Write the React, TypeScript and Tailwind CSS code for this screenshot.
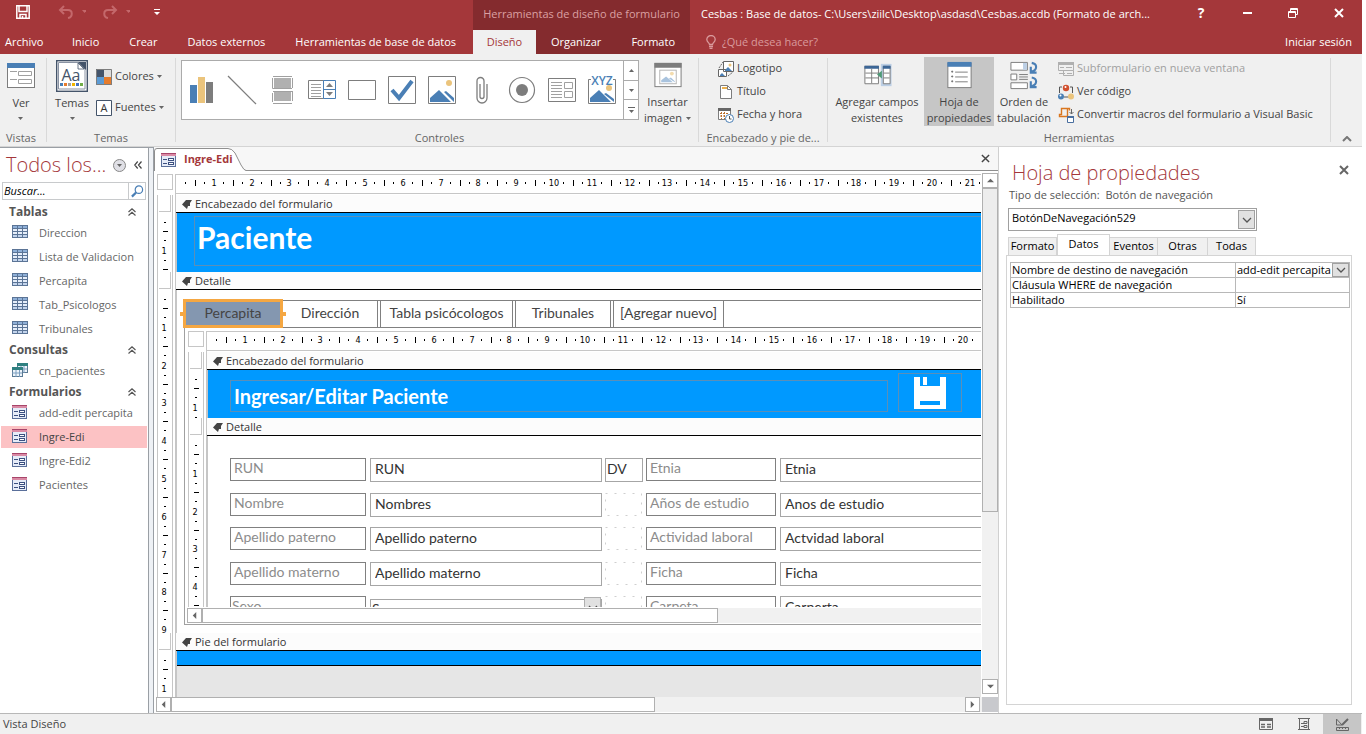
import type { ReactNode } from "react"

const PX_PER_CM = 37.8

const tables = ["Direccion", "Lista de Validacion", "Percapita", "Tab_Psicologos", "Tribunales"]
const forms = ["add-edit percapita", "Ingre-Edi", "Ingre-Edi2", "Pacientes"]

const fields = [
  { id: "run", label: "RUN", value: "RUN", id2: "etnia", label2: "Etnia", value2: "Etnia" },
  { id: "nombre", label: "Nombre", value: "Nombres", id2: "estudio", label2: "Años de estudio", value2: "Anos de estudio" },
  { id: "paterno", label: "Apellido paterno", value: "Apellido paterno", id2: "laboral", label2: "Actividad laboral", value2: "Actvidad laboral" },
  { id: "materno", label: "Apellido materno", value: "Apellido materno", id2: "ficha", label2: "Ficha", value2: "Ficha" },
  { id: "sexo", label: "Sexo", value: "Sexo", id2: "carpeta", label2: "Carpeta", value2: "Carperta" },
]

/* ---------- small glyphs ---------- */

function Caret({ className = "" }: { className?: string }) {
  return (
    <svg viewBox="0 0 5 3" className={`h-[3px] w-[5px] shrink-0 fill-[#666] ${className}`} aria-hidden="true">
      <path d="M0 0h5L2.5 3z" />
    </svg>
  )
}

function Cross({ className = "" }: { className?: string }) {
  return (
    <svg viewBox="0 0 10 10" className={`size-[10px] ${className}`} fill="none" stroke="currentColor" strokeWidth="2" aria-hidden="true">
      <path d="M1 1l8 8M9 1l-8 8" />
    </svg>
  )
}

function Chevron() {
  return (
    <svg viewBox="0 0 10 6" className="h-[6px] w-[10px]" fill="none" stroke="#555" strokeWidth="1.3" aria-hidden="true">
      <path d="M1 1l4 4 4-4" />
    </svg>
  )
}

function TableIcon() {
  return (
    <svg viewBox="0 0 16 14" className="h-[14px] w-4 shrink-0" shapeRendering="crispEdges" aria-hidden="true">
      <path d="M0 0h16v13H0z" fill="#5b7496" />
      <path d="M1 1h4v2H1zM6 1h4v2H6zM11 1h4v2h-4z" fill="#8fb0d8" />
      <path d="M1 4h4v2H1zM6 4h4v2H6zM11 4h4v2h-4zM1 7h4v2H1zM6 7h4v2H6zM11 7h4v2h-4z" fill="#e6eefa" />
      <path d="M1 10h4v2H1zM6 10h4v2H6zM11 10h4v2h-4z" fill="#c3d4ec" />
    </svg>
  )
}

function QueryIcon() {
  return (
    <svg viewBox="0 0 16 16" className="size-4 shrink-0" aria-hidden="true">
      <rect x="5.5" y="1.5" width="10" height="9" fill="#eef5fb" stroke="#5b7a94" />
      <rect x="5" y="1" width="11" height="3" fill="#2f8080" />
      <path d="M9 4v7M12 4v7M5 7h10" stroke="#7d9fc0" />
      <rect x=".5" y="5.5" width="10" height="9" fill="#eef5fb" stroke="#5b7a94" />
      <rect y="5" width="11" height="3" fill="#2f8080" />
      <path d="M4 8v7M7.5 8v7M0 11h10" stroke="#7d9fc0" />
    </svg>
  )
}

function FormIcon() {
  return (
    <svg viewBox="0 0 15 14" className="h-[14px] w-[15px] shrink-0" shapeRendering="crispEdges" aria-hidden="true">
      <rect width="15" height="14" fill="#5a6f9a" />
      <rect x="1" y="1" width="13" height="12" fill="#e6ecf8" />
      <rect width="15" height="1" fill="#a8456a" />
      <rect y="1" width="15" height="2" fill="#d98aa5" />
      <path d="M2 6h4v1H2zM2 10h4v1H2zM7 5h6v3H7zM7 9h6v3H7z" fill="#3c5080" />
      <path d="M8 6h4v1H8zM8 10h4v1H8z" fill="#fff" />
    </svg>
  )
}

function FormSheet() {
  return (
    <svg viewBox="0 0 32 32" className="size-8" fill="none" aria-hidden="true">
      <rect x="2.5" y="3.5" width="27" height="24" fill="#fff" stroke="#7d7d7d" />
      <rect x="2" y="3" width="28" height="5" fill="#4a7fb5" />
      <path d="M5 11.5h7M5 19.5h7M13.500 11.500h13v4h-13zM13.500 19.500h13v4h-13z" stroke="#a0a0a0" />
    </svg>
  )
}

function Mountains() {
  return (
    <>
      <circle cx="21" cy="7" r="3" fill="#ebc47c" />
      <path d="M2 26v-4l9-8 12 12zM16 16l2-1 8 7v4z" fill="#4a7fb5" />
    </>
  )
}

/* ---------- ribbon parts ---------- */

function Group({ label, className = "", children }: { label: string; className?: string; children: ReactNode }) {
  return (
    <>
      <section className={`flex flex-col justify-between ${className}`}>
        <div className="flex">{children}</div>
        <h2 className="h-4 text-center text-[11px] leading-4 whitespace-nowrap text-[#666]">{label}</h2>
      </section>
      <div className="my-1 w-px shrink-0 bg-[#d9d9d9]" />
    </>
  )
}

function BigButton({ icon, className = "", children }: { icon: ReactNode; className?: string; children: ReactNode }) {
  return (
    <button className={`mt-[3px] flex h-[69px] shrink-0 flex-col items-center gap-[3px] pt-[3px] text-center leading-4 ${className}`}>
      {icon}
      <span className="flex flex-col items-center whitespace-nowrap">{children}</span>
    </button>
  )
}

function SmallButton({ icon, className = "", children }: { icon: ReactNode; className?: string; children: ReactNode }) {
  return (
    <button className={`flex h-[23px] items-center gap-[3px] whitespace-nowrap ${className}`}>
      <svg viewBox="0 0 16 16" className="size-4 shrink-0" fill="none" aria-hidden="true">
        {icon}
      </svg>
      {children}
    </button>
  )
}

const gallery: { name: string; icon: ReactNode }[] = [
  {
    name: "Gráfico",
    icon: (
      <>
        <path d="M2 9h7v18H2z" fill="#4a7fb5" />
        <path d="M10 1h7v26h-7z" fill="#ebc47c" />
        <path d="M18 6h7v21h-7z" fill="#7d7d7d" />
      </>
    ),
  },
  { name: "Línea", icon: <path d="M0 0l28 28" stroke="#7d7d7d" strokeWidth="1.2" /> },
  {
    name: "Salto de página",
    icon: (
      <>
        <path d="M6 2h17v10H6zM6 16h17v9H6z" fill="#b0b0b0" />
        <path d="M5 .5h19M4.500 2v10.500H24M24.500 12V2M5 15.500h19M4.500 17v9M24.500 15v10M5 27.500h19" stroke="#a0a0a0" />
      </>
    ),
  },
  {
    name: "Cuadro de lista",
    icon: (
      <>
        <path d="M.5 4.500h15v18H.5z" stroke="#7d7d7d" />
        <path d="M3 8.500h10M3 11.500h10M3 14.500h10M3 17.500h10M3 20.500h10" stroke="#a0a0a0" />
        <path d="M15.500 4.500h12v18h-12zM15.500 13.500h12" stroke="#4a7fb5" />
        <path d="M18 11h7l-3.500-4zM18 16h7l-3.500 4z" fill="#7d7d7d" />
      </>
    ),
  },
  { name: "Rectángulo", icon: <path d="M.5 4.500h27v19H.5z" stroke="#7d7d7d" /> },
  {
    name: "Casilla",
    icon: (
      <>
        <path d="M.5.500h27v27H.5z" stroke="#7d7d7d" />
        <path d="M4 14l7 8L24 5" stroke="#4a7fb5" strokeWidth="4" />
      </>
    ),
  },
  {
    name: "Imagen",
    icon: (
      <>
        <path d="M.5.500h27v27H.5z" stroke="#7d7d7d" />
        <Mountains />
      </>
    ),
  },
  {
    name: "Datos adjuntos",
    icon: <path d="M12 8v12.500a2 2 0 0 0 4 0V5a3.500 3.500 0 0 0-7 0v17a5 5 0 0 0 10 0V8" stroke="#7d7d7d" strokeWidth="1.3" />,
  },
  {
    name: "Botón de opción",
    icon: (
      <>
        <circle cx="14" cy="14" r="12.5" stroke="#7d7d7d" strokeWidth="1.2" />
        <circle cx="14" cy="14" r="6" fill="#7d7d7d" />
      </>
    ),
  },
  {
    name: "Subformulario",
    icon: (
      <>
        <path d="M.5 2.500h27v23H.5z" stroke="#7d7d7d" />
        <path d="M3 6.500h11M3 9.500h11M3 12.500h11M3 15.500h11M3 18.500h11M3 21.500h11M16.500 6.500h8v6h-8zM16.500 15.500h8v6h-8z" stroke="#a0a0a0" />
      </>
    ),
  },
  {
    name: "Imagen enlazada",
    icon: (
      <>
        <path d="M3 3.500H.5v24h27v-24H25" stroke="#7d7d7d" />
        <circle cx="21" cy="12" r="3" fill="#ebc47c" />
        <path d="M2 26v-4l9-8 12 12zM16 18l2-1 8 6v3z" fill="#4a7fb5" />
        <text x="14" y="9" textAnchor="middle" fontSize="12" fontWeight="600" fill="#4a7fb5">
          XYZ
        </text>
      </>
    ),
  },
]

function Ribbon() {
  return (
    <div className="flex h-[93px] shrink-0 border-b border-[#d4d4d4] bg-[#f0f0f0] text-[11px] text-[#444]">
      <Group label="Vistas" className="w-[46px] shrink-0 pr-1">
        <BigButton className="w-[42px]" icon={<FormSheet />}>
          Ver
          <Caret className="mt-[6px]" />
        </BigButton>
      </Group>

      <Group label="Temas" className="w-32 shrink-0 pr-1 pl-1">
        <BigButton
          className="w-[42px]"
          icon={
            <svg viewBox="0 0 32 32" className="size-8" aria-hidden="true">
              <rect x=".7" y=".7" width="30.6" height="30.6" fill="#fff" stroke="#44546a" strokeWidth="1.4" />
              <path d="M2.5 29V2.500h20l6.500 6.500v20z" fill="#fff" stroke="#8a93a3" />
              <path d="M22 2h8v8z" fill="#44546a" />
              <path d="M22 3v6h6z" fill="#fff" stroke="#44546a" strokeWidth=".8" />
              <text x="15" y="21" textAnchor="middle" fontSize="16" fill="#44546a">
                Aa
              </text>
              <path d="M4 23h3v3H4z" fill="#4a7fb5" />
              <path d="M8 23h3v3H8z" fill="#e67c2c" />
              <path d="M12 23h3v3h-3z" fill="#a0a0a0" />
              <path d="M16 23h3v3h-3z" fill="#f0b400" />
              <path d="M20 23h3v3h-3z" fill="#4472c4" />
              <path d="M24 23h3v3h-3z" fill="#70ad47" />
            </svg>
          }
        >
          Temas
          <Caret className="mt-[6px]" />
        </BigButton>
        <div className="mt-[11px] ml-[3px] flex flex-col gap-2">
          <SmallButton
            icon={
              <>
                <path d="M0 0h8v8H0z" fill="#44546a" />
                <path d="M8 0h8v8H8z" fill="#dcdcdc" />
                <path d="M0 8h8v8H0z" fill="#5b9bd5" />
                <path d="M8 8h8v8H8z" fill="#e67c2c" />
                <path d="M.5.500h15v15H.5z" stroke="#7d7d7d" />
              </>
            }
          >
            Colores
            <Caret />
          </SmallButton>
          <SmallButton
            icon={
              <>
                <path d="M.5.500h15v15H.5z" fill="#fff" stroke="#44546a" />
                <text x="8" y="12" textAnchor="middle" fontSize="11" fill="#333">
                  A
                </text>
              </>
            }
          >
            Fuentes
            <Caret />
          </SmallButton>
        </div>
      </Group>

      <Group label="Controles" className="w-[522px] shrink-0 pl-[5px]">
        <div className="mt-[6px] flex h-[60px] border border-[#ababab] bg-white">
          {gallery.map((item) => (
            <button key={item.name} aria-label={item.name} className="flex w-10 items-center justify-center">
              <svg viewBox="0 0 28 28" className="size-7 overflow-visible" fill="none" aria-hidden="true">
                {item.icon}
              </svg>
            </button>
          ))}
          <div className="ml-px flex w-[15px] flex-col divide-y divide-[#ababab] border-l border-[#ababab]">
            <button aria-label="Fila anterior" className="flex flex-1 items-center justify-center">
              <Caret className="rotate-180" />
            </button>
            <button aria-label="Fila siguiente" className="flex flex-1 items-center justify-center">
              <Caret />
            </button>
            <button aria-label="Más controles" className="flex flex-1 flex-col items-center justify-center gap-0.5">
              <span className="h-px w-[7px] bg-[#666]" />
              <Caret />
            </button>
          </div>
        </div>
        <BigButton
          className="w-[57px]"
          icon={
            <svg viewBox="0 0 32 32" className="size-8" aria-hidden="true">
              <rect x="2.5" y="3.5" width="27" height="24" fill="#fff" stroke="#7d7d7d" />
              <rect x="2" y="3" width="28" height="5" fill="#7d7d7d" />
              <rect x="7.5" y="10.5" width="17" height="14" fill="#fff" stroke="#b5b5b5" />
              <circle cx="20" cy="14" r="2" fill="#f3dcae" />
              <path d="M9 23v-2l5-4 7 6zM17 19l2-1 4 4v1z" fill="#a9c3de" />
            </svg>
          }
        >
          <span>Insertar</span>
          <span className="flex items-center gap-1">
            imagen <Caret />
          </span>
        </BigButton>
      </Group>

      <Group label="Encabezado y pie de..." className="w-32 shrink-0">
        <div className="mt-[3px] ml-[19px] flex flex-col">
          <SmallButton
            icon={
              <>
                <path d="M5.500.500h10v10h-10zM.5 8.500h8v7h-8z" fill="#fff" stroke="#666" />
                <path d="M7 9l3-3 4 4H7zM2 14l2-2 3 3H2z" fill="#4a7fb5" />
                <circle cx="12" cy="4" r="1.5" fill="#ebc47c" />
                <path d="M1 7l4-6M10 15l5-4" stroke="#666" strokeDasharray="2 1" />
              </>
            }
          >
            Logotipo
          </SmallButton>
          <SmallButton
            icon={
              <>
                <path d="M2.500 1.500h7l4 4v9h-11z" fill="#fff" stroke="#7d7d7d" />
                <path d="M9.500 1.500v4h4" stroke="#7d7d7d" />
                <path d="M4 3h5v2H4z" fill="#ebb04c" />
              </>
            }
          >
            Título
          </SmallButton>
          <SmallButton
            icon={
              <>
                <path d="M.5 1.500h12v11H.5z" fill="#fff" stroke="#7d7d7d" />
                <path d="M0 1h13v3H0z" fill="#666" />
                <path d="M2 6.500h9M2 9h5M3.500 5v7M6.500 5v7" stroke="#ba7030" strokeDasharray="2 1" />
                <circle cx="11.5" cy="11.5" r="4" fill="#fff" stroke="#4a7fb5" />
                <path d="M11.500 9v3h2" stroke="#555" />
              </>
            }
          >
            Fecha y hora
          </SmallButton>
        </div>
      </Group>

      <Group label="Herramientas" className="w-[502px] shrink-0">
        <BigButton
          className="ml-0.5 w-[94px]"
          icon={
            <svg viewBox="0 0 32 32" className="size-8" aria-hidden="true">
              <path d="M20 4h11v23H20z" fill="#bccfe5" />
              <path d="M3.500 6.500h14v18h-14zM22.500 6.500h7v18h-7z" fill="#fff" stroke="#7d7d7d" />
              <path d="M3 6h15v3H3zM22 6h8v3h-8z" fill="#3c6696" />
              <path d="M4 13.500h14M4 18.500h14M10.500 9v15M23 13.500h6M23 18.500h6" stroke="#7d7d7d" />
              <path d="M16 15l5-4v8z" fill="#4f9a77" />
            </svg>
          }
        >
          <span>Agregar campos</span>
          <span>existentes</span>
        </BigButton>
        <BigButton
          className="w-[70px] bg-[#c6c6c6]"
          icon={
            <svg viewBox="0 0 32 32" className="size-8" aria-hidden="true">
              <rect x="4.5" y="3.5" width="24" height="25" fill="#fff" stroke="#7d7d7d" />
              <rect x="4" y="2" width="25" height="5" fill="#4a7fb5" />
              <path d="M12 12.500h13M12 17.500h13M12 22.500h13" stroke="#7d7d7d" />
              <path d="M8.500 11.500h1v1h-1zM8.500 16.500h1v1h-1zM8.500 21.500h1v1h-1z" fill="none" stroke="#666" />
            </svg>
          }
        >
          <span>Hoja de</span>
          <span>propiedades</span>
        </BigButton>
        <BigButton
          className="w-[60px]"
          icon={
            <svg viewBox="0 0 32 32" className="size-8" aria-hidden="true">
              <path d="M2.500 2.500h17v8h-17zM2.500 14.500h6v6h-6zM2.500 23.500h17v6h-17z" fill="#fff" stroke="#7d7d7d" />
              <path d="M15 3h4v7h-4z" fill="#bccfe5" />
              <path d="M11 15h9M11 17.500h9M11 20h9" stroke="#7d7d7d" />
              <path
                d="M24 3c6 1 6 7 0 9M29 13h-6V7M24 18c6 1 6 7 0 9M29 28h-6v-6"
                fill="none"
                stroke="#4a7fb5"
                strokeWidth="2.2"
              />
            </svg>
          }
        >
          <span>Orden de</span>
          <span>tabulación</span>
        </BigButton>
        <div className="mt-[3px] ml-1 flex flex-col">
          <SmallButton
            className="text-[#a0a0a0]"
            icon={
              <>
                <path d="M.5 1.500h15v8H.5zM5.500 9.500v5h10v-5" stroke="#b0b0b0" />
                <path d="M0 1h16v3H0z" fill="#b0b0b0" />
                <path d="M2 6.500h4M8 6.500h6M1 12.500h6M9 12.500h5" stroke="#b0b0b0" />
              </>
            }
          >
            Subformulario en nueva ventana
          </SmallButton>
          <SmallButton
            icon={
              <>
                <path d="M4 3H1.500v6M12 3h2.500v6M6 13h5" stroke="#555" />
                <circle cx="8" cy="4" r="3.2" fill="#d1502f" />
                <circle cx="3" cy="12.5" r="3" fill="#4a7fb5" />
                <circle cx="13" cy="12.5" r="3" fill="#ebc47c" />
                <circle cx="7.5" cy="3" r="1" fill="#fff" />
                <circle cx="2.5" cy="11.5" r="1" fill="#fff" />
              </>
            }
          >
            Ver código
          </SmallButton>
          <SmallButton
            icon={
              <>
                <path d="M3.500 1.500h6v8h-8v-2h2zM9.500 1.500h2v2" stroke="#d9761f" strokeWidth="1.4" />
                <path d="M13.500 2v5M11.500 5l2 2 2-2" stroke="#666" />
                <path d="M9.500 9.500h6v6h-6z" fill="#fff" stroke="#4a6f9f" />
                <path d="M9 9h7v2H9z" fill="#4a6f9f" />
              </>
            }
          >
            Convertir macros del formulario a Visual Basic
          </SmallButton>
        </div>
      </Group>

      <button aria-label="Contraer la cinta" className="mr-2.5 mb-1 ml-auto self-end">
        <svg viewBox="0 0 10 6" className="h-[6px] w-[10px]" fill="none" stroke="#777" strokeWidth="2" aria-hidden="true">
          <path d="M1 5l4-4 4 4" />
        </svg>
      </button>
    </div>
  )
}

function TitleBar() {
  return (
    <header className="flex h-[54px] shrink-0 bg-[#a4373a] text-[11px] whitespace-nowrap text-white">
      <div className="flex w-[473px] shrink-0 flex-col">
        <div className="flex h-[30px] items-center pb-1.5 pl-4">
          <button aria-label="Guardar">
            <svg viewBox="0 0 14 14" className="size-[14px]" fill="none" stroke="#fff" strokeWidth="1.5" aria-hidden="true">
              <path d="M.8.800h12.400v12.400H.8zM3 1v5.500h8V1M4 13V9.500h6V13M6.500 11v2" />
            </svg>
          </button>
          <button aria-label="Deshacer" className="ml-7">
            <svg viewBox="0 0 28 14" className="h-[14px] w-7" fill="none" stroke="#c4686b" strokeWidth="2" aria-hidden="true">
              <path d="M6 1L2 5l4 4M2 5h8c5 0 5 7 0 8" />
              <path d="M24 5h5l-2.500 3z" fill="#c4686b" stroke="none" />
            </svg>
          </button>
          <button aria-label="Rehacer" className="ml-4">
            <svg viewBox="0 0 28 14" className="h-[14px] w-7" fill="none" stroke="#c4686b" strokeWidth="2" aria-hidden="true">
              <path d="M10 1l4 4-4 4M14 5H6c-5 0-5 7 0 8" />
              <path d="M24 5h5l-2.500 3z" fill="#c4686b" stroke="none" />
            </svg>
          </button>
          <button aria-label="Personalizar" className="ml-6">
            <svg viewBox="0 0 6 6" className="size-[6px]" fill="#fff" aria-hidden="true">
              <path d="M0 0h6v1H0zM0 3h6L3 6z" />
            </svg>
          </button>
        </div>
        <nav className="flex h-6">
          <button className="w-[57px] pl-[5px] text-left">Archivo</button>
          <button className="px-[15px]">Inicio</button>
          <button className="px-[15px]">Crear</button>
          <button className="px-[15px]">Datos externos</button>
          <button className="px-[15px]">Herramientas de base de datos</button>
        </nav>
      </div>

      <div className="flex w-[217px] shrink-0 flex-col bg-[#842b2e]">
        <p className="h-[30px] text-center leading-7 text-[#dba0a2]">Herramientas de diseño de formulario</p>
        <nav className="flex h-6">
          <button className="w-[63px] bg-[#f0f0f0] text-[#a4373a]">Diseño</button>
          <button className="px-[15px]">Organizar</button>
          <button className="px-[15px]">Formato</button>
        </nav>
      </div>

      <div className="flex min-w-0 flex-1 flex-col">
        <div className="flex h-[30px]">
          <h1 className="min-w-0 flex-1 truncate pl-[11px] leading-7">
            Cesbas : Base de datos- C:\Users\ziilc\Desktop\asdasd\Cesbas.accdb (Formato de arch...
          </h1>
          <button aria-label="Ayuda" className="h-[26px] w-[46px] text-sm font-bold">
            ?
          </button>
          <button aria-label="Minimizar" className="flex h-[26px] w-[46px] items-center justify-center">
            <span className="h-0.5 w-[9px] bg-white" />
          </button>
          <button aria-label="Restaurar" className="flex h-[26px] w-[46px] items-center justify-center">
            <svg viewBox="0 0 10 10" className="size-[10px]" fill="none" stroke="#fff" aria-hidden="true">
              <path d="M.5 3.500h7v6h-7zM2.500 3V.5h7v6H8M0 4.500h8M2 1.500h8" />
            </svg>
          </button>
          <button aria-label="Cerrar" className="flex h-[26px] w-[46px] items-center justify-center">
            <Cross />
          </button>
        </div>
        <div className="flex h-6 items-center justify-between pr-[10px] pl-4">
          <button className="flex items-center gap-1.5 text-[#d99a9c]">
            <svg viewBox="0 0 10 14" className="h-[14px] w-[10px]" fill="none" stroke="#d99a9c" strokeWidth="1.3" aria-hidden="true">
              <path d="M3.500 9.500C3.500 8 .8 7 .8 4.500a4.200 4 0 0 1 8.400 0c0 2.500-2.700 3.500-2.700 5zM3 11.500h4M3.500 13.500h3" />
            </svg>
            ¿Qué desea hacer?
          </button>
          <button>Iniciar sesión</button>
        </div>
      </div>
    </header>
  )
}

/* ---------- navigation pane ---------- */

function NavHeading({ children }: { children: ReactNode }) {
  return (
    <h3 className="flex h-[18px] items-center justify-between pr-3 pl-[9px] text-xs font-bold text-[#555]">
      {children}
      <svg viewBox="0 0 8 8" className="size-2" fill="none" stroke="#555" strokeWidth="1.2" aria-hidden="true">
        <path d="M.5 4L4 .8 7.500 4M.5 7.500L4 4.300l3.500 3.200" />
      </svg>
    </h3>
  )
}

function NavItem({ icon, active, children }: { icon: ReactNode; active?: boolean; children: ReactNode }) {
  return (
    <li className="h-6 p-px">
      <a
        href="#objeto"
        className={`flex h-[22px] items-center pl-[11px] whitespace-nowrap ${active ? "bg-[#fcc2c4] text-[#444]" : "text-[#666]"}`}
      >
        <span className="w-[27px] pb-0.5">{icon}</span>
        {children}
      </a>
    </li>
  )
}

function NavPane() {
  return (
    <aside className="flex w-[154px] shrink-0 border-t border-[#9a9fa5] text-[11px]">
      <div className="w-[148px] bg-white">
        <div className="flex h-[34px] items-center pl-[6px]">
          <h2 className="w-[107px] text-xl font-light whitespace-nowrap text-[#a4373a]">Todos los...</h2>
          <button aria-label="Filtrar objetos" className="flex size-[13px] items-center justify-center rounded-full border border-[#888] bg-[#e0e0e6]">
            <Caret />
          </button>
          <button aria-label="Contraer panel" className="ml-2">
            <svg viewBox="0 0 8 8" className="size-2" fill="none" stroke="#444" strokeWidth="1.2" aria-hidden="true">
              <path d="M3.700.5L.7 4l3 3.500M7.500.5l-3 3.500 3 3.500" />
            </svg>
          </button>
        </div>
        <div className="mr-0.5 ml-0.5 flex h-[18px] border border-[#c8cacc]">
          <input aria-label="Buscar" placeholder="Buscar..." className="w-[125px] pl-px italic outline-none placeholder:text-black" />
          <button aria-label="Buscar" className="flex flex-1 items-center justify-center border-l border-[#c8cacc]">
            <svg viewBox="0 0 14 14" className="size-[13px]" fill="none" stroke="#4a7fb5" aria-hidden="true">
              <circle cx="8.5" cy="5" r="4" strokeWidth="1.3" />
              <path d="M5.500 8L1 12.500" strokeWidth="2.4" />
            </svg>
          </button>
        </div>
        <div className="mt-[3px]">
          <NavHeading>Tablas</NavHeading>
          <ul>
            {tables.map((name) => (
              <NavItem key={name} icon={<TableIcon />}>
                {name}
              </NavItem>
            ))}
          </ul>
          <NavHeading>Consultas</NavHeading>
          <ul>
            <NavItem icon={<QueryIcon />}>cn_pacientes</NavItem>
          </ul>
          <NavHeading>Formularios</NavHeading>
          <ul>
            {forms.map((name) => (
              <NavItem key={name} icon={<FormIcon />} active={name === "Ingre-Edi"}>
                {name}
              </NavItem>
            ))}
          </ul>
        </div>
      </div>
      <div className="flex-1 border-x border-[#9a9fa5] bg-[#eef1f5]" />
    </aside>
  )
}

/* ---------- design surface ---------- */

function HRuler({ cm }: { cm: number }) {
  const units = Array.from({ length: cm + 1 }, (_, i) => i)
  return (
    <div className="flex pt-[3px]">
      <div className="flex w-[21px] shrink-0 pl-[3px]">
        <div className="size-4 border border-[#c6c6c6]" />
      </div>
      <svg className="h-[21px] min-w-0 flex-1 border-t border-l border-[#c6c6c6]" aria-hidden="true">
        <g shapeRendering="crispEdges">
          {units.map((u) => {
            const x = u * PX_PER_CM
            return (
              <g key={u}>
                <rect x={Math.round(x + 9)} y="7" width="1" height="2" />
                <rect x={Math.round(x + 19)} y="5" width="1" height="6" />
                <rect x={Math.round(x + 28)} y="7" width="1" height="2" />
              </g>
            )
          })}
          <rect y="18" width="100%" height="1" fill="#c6c6c6" />
        </g>
        {units.slice(1).map((u) => (
          <text key={u} x={Math.round(u * PX_PER_CM)} y="11" textAnchor="middle" fontSize="9" fontFamily="DejaVu Sans Condensed, Liberation Sans, sans-serif">
            {u}
          </text>
        ))}
      </svg>
    </div>
  )
}

function VRuler({ cm }: { cm: number }) {
  const units = Array.from({ length: cm + 1 }, (_, i) => i)
  return (
    <div className="w-[21px] shrink-0 pl-[3px]">
      <div className="relative h-full w-4 border-x border-[#c6c6c6]">
        <svg className="absolute inset-0 h-full w-full" aria-hidden="true">
          <g shapeRendering="crispEdges">
            {units.map((u) => {
              const y = u * PX_PER_CM
              return (
                <g key={u}>
                  <rect x="6" y={Math.round(y + 9)} width="2" height="1" />
                  <rect x="5" y={Math.round(y + 18)} width="5" height="1" />
                  <rect x="6" y={Math.round(y + 27)} width="2" height="1" />
                </g>
              )
            })}
          </g>
          {units.slice(1).map((u) => (
            <text key={u} x="6" y={Math.round(u * PX_PER_CM + 3)} textAnchor="middle" fontSize="9" fontFamily="DejaVu Sans Condensed, Liberation Sans, sans-serif">
              {u}
            </text>
          ))}
        </svg>
      </div>
    </div>
  )
}

function Section({ title, cm, className = "", children }: { title: string; cm: number; className?: string; children?: ReactNode }) {
  return (
    <>
      <div className="flex h-[18px] shrink-0">
        <div className="w-[21px] shrink-0 pl-[3px]">
          <div className="h-full w-4 border-x border-[#c6c6c6] pr-px pl-px">
            <div className="h-[17px] border-r border-b border-[#c6c6c6]" />
          </div>
        </div>
        <div className="w-px bg-[#c6c6c6]" />
        <div className="flex flex-1 items-center gap-[3px] border-b border-black bg-[#fcfcfc] pt-px pl-[6px] text-[11px] text-[#333]">
          <svg viewBox="0 0 10 9" className="h-[9px] w-[10px]" fill="#444" aria-hidden="true">
            <path d="M4 0h6L8 3v3H6l-1 3L0 4.500z" />
          </svg>
          {title}
        </div>
      </div>
      <div className={`flex shrink-0 overflow-hidden ${className}`}>
        <VRuler cm={cm} />
        <div className="w-0.5 shrink-0 bg-[#c6c6c6]" />
        {children}
      </div>
    </>
  )
}

function ScrollButton({ dir }: { dir: "up" | "down" | "left" | "right" }) {
  const paths = { up: "M0 6l4-4 4 4z", down: "M0 2h8L4 6z", left: "M6 0v8L2 4z", right: "M2 0l4 4-4 4z" }
  const labels = { up: "Arriba", down: "Abajo", left: "Izquierda", right: "Derecha" }
  return (
    <button aria-label={labels[dir]} className="flex h-[15px] min-w-[15px] shrink-0 items-center justify-center border border-[#b0b0b0] bg-white">
      <svg viewBox="0 0 8 8" className="size-[7px]" fill="#666" aria-hidden="true">
        <path d={paths[dir]} />
      </svg>
    </button>
  )
}

function FieldRow({ field, first, combo }: { field: (typeof fields)[number]; first: boolean; combo: boolean }) {
  const labelBox = "h-[23px] truncate border border-[#808080] text-sm leading-[18px] text-[#8c8c8c]"
  const inputBox = "h-6 min-w-0 border border-[#a6a6a6] pb-[3px] text-sm leading-[18px] text-[#333] outline-none"
  return (
    <div className="grid shrink-0 grid-cols-[137px_232px_38px_131px_1fr] gap-[3px] odd:h-[35px] even:h-[34px]">
      <label htmlFor={field.id} className={`w-[136px] ${labelBox} ${combo ? "pl-px" : "pl-[3px]"}`}>
        {field.label}
      </label>
      {combo ? (
        <div className="relative">
          <select id={field.id} className={`w-full appearance-none pl-px ${inputBox}`}>
            <option>{field.value}</option>
          </select>
          <span className="pointer-events-none absolute top-px right-px flex h-[22px] w-[17px] items-center justify-center border border-[#b0b0b0] bg-[#e1e1e1]">
            <Chevron />
          </span>
        </div>
      ) : (
        <input id={field.id} defaultValue={field.value} className={`pl-1 ${inputBox}`} />
      )}
      {first ? (
        <input aria-label="DV" defaultValue="DV" className={`pl-px ${inputBox}`} />
      ) : (
        <svg className="h-[23px] w-[38px]" fill="none" stroke="#cfcfcf" aria-hidden="true">
          <rect x=".5" y=".5" width="36" height="22" strokeDasharray="2 7" />
        </svg>
      )}
      <label htmlFor={field.id2} className={`w-[130px] pl-[3px] ${labelBox}`}>
        {field.label2}
      </label>
      <input id={field.id2} defaultValue={field.value2} className={`border-r-0 pl-1 ${inputBox}`} />
    </div>
  )
}

function Subform() {
  return (
    <div className="ml-[7px] flex h-[297px] flex-col overflow-hidden border-b border-l border-[#a0a0a0]">
      <HRuler cm={20} />
      <Section title="Encabezado del formulario" cm={1} className="h-12">
        <div className="flex flex-1 items-start bg-[#0099ff] pl-[22px]">
          <h3 className="mt-[10px] h-8 w-[658px] border border-[#5a8fb8] pl-[3px] font-['Lato',sans-serif] text-xl leading-[30px] font-bold text-white">
            Ingresar/Editar Paciente
          </h3>
          <button aria-label="Guardar paciente" className="mt-[3px] ml-[10px] flex h-[39px] w-16 items-center justify-center border border-[#5a8fb8]">
            <svg viewBox="0 0 32 32" className="size-8" aria-hidden="true">
              <path d="M0 0h32v32H0z" fill="#fff" />
              <path d="M6 0h20v9H6zM6 24h20v4H6z" fill="#0099ff" />
              <path d="M9 0h4v8H9z" fill="#fff" />
            </svg>
          </button>
        </div>
      </Section>
      <Section title="Detalle" cm={4} className="h-[171px]">
        <div className="flex flex-1 flex-col pt-[22px] pl-[22px] font-['Lato',sans-serif]">
          {fields.map((field, i) => (
            <FieldRow key={field.id} field={field} first={i === 0} combo={field.id === "sexo"} />
          ))}
        </div>
      </Section>
      <div className="mt-px ml-0.5 flex h-[15px] shrink-0 bg-[#f1f1f1]">
        <ScrollButton dir="left" />
        <div className="w-[65%] border border-[#b0b0b0] bg-white" />
      </div>
    </div>
  )
}

function FormTabs() {
  const tab = "border-r border-[#808080] pb-0.5"
  return (
    <nav className="mt-[10px] ml-[6px] flex h-7 shrink-0 border-y border-[#808080] font-['Lato',sans-serif] text-sm whitespace-nowrap text-[#444]">
      <button className="relative -mt-0.5 -mb-px w-[100px] border-[3px] border-[#f5a742] bg-[#8497b0] pb-0.5">
        Percapita
        <span className="absolute top-1/2 -left-1.5 size-1 -translate-y-1/2 bg-[#f5a742]" />
        <span className="absolute top-1/2 -right-1.5 size-1 -translate-y-1/2 bg-[#f5a742]" />
      </button>
      <button className={`w-[95px] ${tab}`}>Dirección</button>
      <button className={`ml-0.5 w-[133px] border-l ${tab}`}>Tabla psicócologos</button>
      <button className={`ml-0.5 w-24 border-l ${tab}`}>Tribunales</button>
      <button className={`ml-0.5 w-[111px] border-l ${tab}`}>[Agregar nuevo]</button>
    </nav>
  )
}

function Document() {
  return (
    <main className="flex min-w-0 flex-1 flex-col border-r border-[#d0d0d0] bg-white pb-px">
      <div className="flex h-6 shrink-0 items-end border-b border-[#8f8f8f] bg-[#f7f7f7]">
        <button className="relative -mb-px flex h-[23px] w-[92px] items-center pl-[7px] text-[11px] font-bold text-[#a4373a]">
          <svg viewBox="0 0 92 23" className="absolute inset-0 h-full w-full" aria-hidden="true">
            <path d="M.5 23V3Q.5.500 3 .5H74Q78 .5 81 5L87 17Q90 22.500 92 22.500V23z" fill="#fff" />
            <path d="M.5 23V3Q.5.500 3 .5H74Q78 .5 81 5L87 17Q90 22.500 92 22.500" fill="none" stroke="#8f8f8f" />
          </svg>
          <span className="relative flex items-center gap-2">
            <FormIcon />
            Ingre-Edi
          </span>
        </button>
        <button aria-label="Cerrar documento" className="mr-2 mb-[7px] ml-auto">
          <svg viewBox="0 0 10 10" className="size-[9px]" fill="none" stroke="#444" strokeWidth="1.6" aria-hidden="true">
            <path d="M1 1l8 8M9 1l-8 8" />
          </svg>
        </button>
      </div>

      <div className="flex min-h-0 flex-1">
        <div className="flex min-w-0 flex-1 flex-col overflow-hidden pr-px">
          <HRuler cm={21} />
          <Section title="Encabezado del formulario" cm={1} className="h-[59px]">
            <div className="flex-1 bg-[#0099ff] pt-[3px] pl-[17px]">
              <h2 className="h-[50px] border border-r-0 border-[#5a8fb8] pl-0.5 font-['Lato',sans-serif] text-3xl leading-10 font-bold text-white">
                Paciente
              </h2>
            </div>
          </Section>
          <Section title="Detalle" cm={9} className="h-[343px]">
            <div className="flex min-w-0 flex-1 flex-col">
              <FormTabs />
              <Subform />
            </div>
          </Section>
          <Section title="Pie del formulario" cm={1} className="min-h-0 flex-1">
            <div className="flex flex-1 flex-col bg-[#e6e6e6]">
              <div className="h-[15px] border-b border-black bg-[#0099ff]" />
            </div>
          </Section>
        </div>
        <div className="mt-0.5 mb-[3px] flex w-4 shrink-0 flex-col bg-[#f1f1f1]">
          <ScrollButton dir="up" />
          <div className="min-h-0 flex-1">
            <div className="h-[66%] border border-[#b0b0b0] bg-[#ededed]" />
          </div>
          <ScrollButton dir="down" />
        </div>
      </div>

      <div className="flex h-[15px] shrink-0 bg-[#f1f1f1]">
        <div className="w-0.5 bg-white" />
        <ScrollButton dir="left" />
        <div className="flex flex-1">
          <div className="w-[61%] border border-[#b0b0b0] bg-white" />
        </div>
        <ScrollButton dir="right" />
        <div className="ml-0.5 w-4 bg-[#c8c9cd]" />
      </div>
    </main>
  )
}

/* ---------- property sheet ---------- */

function PropertySheet() {
  const tab = "h-[18px] border border-b-0 border-[#d4d4d4] bg-[#f0f0f0]"
  const cell = "h-[15px] border border-[#b8b8b8] p-0 pl-px text-left font-normal"
  return (
    <aside className="flex w-[363px] shrink-0 flex-col bg-white px-[10px] pb-2 text-[11px] text-black">
      <div className="mt-[14px] flex items-start justify-between pl-[3px]">
        <h2 className="text-xl leading-6 font-light whitespace-nowrap text-[#a4373a]">Hoja de propiedades</h2>
        <button aria-label="Cerrar hoja de propiedades" className="mt-1 mr-[3px] text-[#666]">
          <Cross />
        </button>
      </div>
      <p className="h-[23px] leading-5 whitespace-pre text-[#555]">{"Tipo de selección:  Botón de navegación"}</p>
      <div className="relative ml-[-1px] w-[249px]">
        <select aria-label="Objeto" className="h-[23px] w-full appearance-none border border-[#a0a0a0] bg-white pb-0.5 pl-[3px] outline-none">
          <option>BotónDeNavegación529</option>
        </select>
        <span className="pointer-events-none absolute top-0.5 right-0.5 flex h-[19px] w-[17px] items-center justify-center border border-[#a0a0a0] bg-[#e1e1e1]">
          <Chevron />
        </span>
      </div>
      <div role="tablist" className="mt-[3px] ml-[-1px] flex items-end">
        <button role="tab" className={`w-[49px] ${tab}`}>Formato</button>
        <button role="tab" aria-selected="true" className="-mb-px h-[22px] w-[53px] border border-b-0 border-[#d4d4d4] bg-white pb-0.5">
          Datos
        </button>
        <button role="tab" className={`w-12 border-l-0 ${tab}`}>Eventos</button>
        <button role="tab" className={`w-[50px] border-l-0 ${tab}`}>Otras</button>
        <button role="tab" className={`w-12 border-l-0 ${tab}`}>Todas</button>
      </div>
      <div className="-ml-[3px] flex-1 border border-[#d4d4d4] pt-[6px] pr-px pl-[3px]">
        <table className="w-full table-fixed border-collapse leading-[14px]">
          <tbody>
            <tr>
              <th scope="row" className={`w-[225px] ${cell}`}>Nombre de destino de navegación</th>
              <td className={cell}>
                <div className="flex h-[14px]">
                  <input aria-label="Nombre de destino de navegación" defaultValue="add-edit percapita" className="h-[14px] min-w-0 flex-1 outline-none" />
                  <button aria-label="Elegir destino" className="flex w-[17px] items-center justify-center border border-[#a0a0a0] bg-[#e1e1e1]">
                    <Chevron />
                  </button>
                </div>
              </td>
            </tr>
            <tr>
              <th scope="row" className={cell}>Cláusula WHERE de navegación</th>
              <td className={cell} />
            </tr>
            <tr>
              <th scope="row" className={cell}>Habilitado</th>
              <td className={cell}>Sí</td>
            </tr>
          </tbody>
        </table>
      </div>
    </aside>
  )
}

function StatusBar() {
  return (
    <footer className="flex h-[21px] shrink-0 items-stretch border-t border-[#b8b8b8] bg-[#f0f0f0] pr-px pl-[3px] text-[11px] leading-5 text-[#444]">
      <p className="flex-1">Vista Diseño</p>
      <button aria-label="Vista Formulario" className="flex w-[38px] items-center justify-center">
        <svg viewBox="0 0 14 12" className="h-3 w-[14px]" fill="none" stroke="#666" aria-hidden="true">
          <path d="M.5.500h13v11H.5z" />
          <path d="M0 0h14v3H0z" fill="#666" stroke="none" />
          <path d="M2 6.500h4M2 9h4M8 6.500h4M8 9h4" strokeWidth="1.5" />
        </svg>
      </button>
      <button aria-label="Vista Presentación" className="flex w-[38px] items-center justify-center">
        <svg viewBox="0 0 12 12" className="size-3" fill="none" stroke="#666" aria-hidden="true">
          <path d="M0 .5h12M0 11.500h12M1.500 0v12M10.500 0v12M3 5.500h3M6 3.500h3v2H6zM3 8.500h3M6 7.500h3v2H6z" />
        </svg>
      </button>
      <button aria-label="Vista Diseño" className="flex w-[38px] items-center justify-center bg-[#c6c6c6]">
        <svg viewBox="0 0 14 13" className="h-[13px] w-[14px]" fill="none" stroke="#666" aria-hidden="true">
          <path d="M1.500 1v6H7z" />
          <path d="M7 7l6-6" strokeWidth="2" />
          <path d="M1.500 9.500h12v3h-12zM4.500 10v1M7.500 10v1M10.500 10v1" />
        </svg>
      </button>
    </footer>
  )
}

export default function App() {
  return (
    <div className="flex h-screen flex-col overflow-hidden bg-white pr-1 font-['Open_Sans',sans-serif]">
      <TitleBar />
      <Ribbon />
      <div className="flex min-h-0 flex-1">
        <NavPane />
        <Document />
        <PropertySheet />
      </div>
      <StatusBar />
    </div>
  )
}
